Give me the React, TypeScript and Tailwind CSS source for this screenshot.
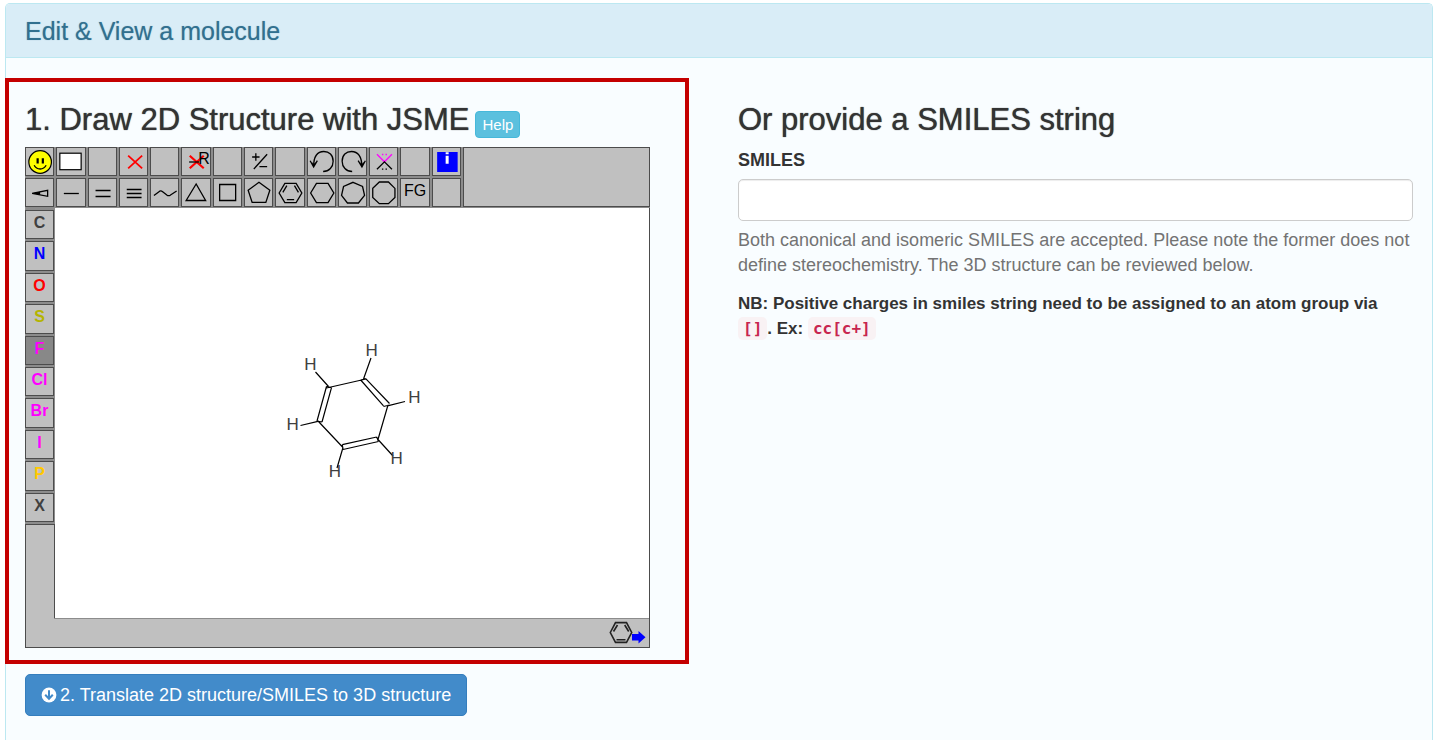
import React, { useState } from "react";

type Tool = { label: string; icon?: React.ReactNode; text?: string };

const stroke = { fill: "none", stroke: "#000", strokeWidth: 1.3 };

const topTools: Tool[] = [
  {
    label: "Smiles",
    icon: (
      <>
        <circle cx="15" cy="15" r="11.3" fill="#ff0" stroke="#000" strokeWidth="1.2" />
        <path d="M12.5 11.3v5.2M17.7 11.3v5.2" stroke="#000" strokeWidth="2.2" />
        <path d="M9 18.3Q11 22 15 22T21 18.3" {...stroke} />
      </>
    ),
  },
  { label: "New", icon: <rect x="3.7" y="6.2" width="21.3" height="16.5" fill="#fff" stroke="#000" strokeWidth="1.2" /> },
  { label: "Unused tool 1" },
  { label: "Delete atom", icon: <path d="M9 8.7L23 21.3M23 8.7L9 21.3" stroke="#f00" strokeWidth="1.8" /> },
  { label: "Unused tool 2" },
  {
    label: "Delete group",
    icon: (
      <>
        <path d="M8.6 8.7L22.6 21.3M22.6 8.7L8.6 21.3" stroke="#f00" strokeWidth="2.2" />
        <path d="M8 15H18" {...stroke} />
        <text x="17" y="17" fontSize="16" fill="#000">R</text>
      </>
    ),
  },
  { label: "Unused tool 3" },
  { label: "Charge", icon: <path d="M8 10h7.4M11.7 6.3v7.4M9.7 22L23 7.3M15.3 19.7H23" {...stroke} /> },
  { label: "Unused tool 4" },
  { label: "Undo", icon: <path d="M16 24.5C22 24.5 26 20 26 14.2C26 8 22 4.5 16.7 4.5C10.5 4.5 6.5 9 6.5 19.5M3 13.7L6.5 20L10.2 13.7M4.5 15.5L6.5 19L8.7 15.5" {...stroke} /> },
  { label: "Redo", icon: <path d="M14 24.5C8 24.5 4 20 4 14.2C4 8 8 4.5 13.3 4.5C19.5 4.5 23.5 9 23.8 19.5M20 13.7L23.8 20L27.2 13.7M21.5 15.5L23.8 19L25.7 15.5" {...stroke} /> },
  {
    label: "Spiro ring",
    icon: (
      <>
        <path d="M7.8 7.3L15.3 14.8L22.8 7.3" fill="none" stroke="#f0f" strokeWidth="1.3" />
        <path d="M7.8 22.3L15.3 14.8L22.8 22.3" {...stroke} />
        <path d="M12.8 7.5h1.4M16.4 7.5h1.4" stroke="#f0f" strokeWidth="1.3" />
        <path d="M12.8 22.2h1.4M16.4 22.2h1.4" {...stroke} />
      </>
    ),
  },
  { label: "Unused tool 5" },
  {
    label: "Information",
    icon: (
      <>
        <rect x="5" y="5" width="20.5" height="20" fill="#00f" />
        <path d="M15 5.3v2M15 8.7v8" stroke="#fff" strokeWidth="3" />
      </>
    ),
  },
];

const bondTools: Tool[] = [
  {
    label: "Stereo bond",
    icon: (
      <>
        <path d="M7 15.3L22.5 12.3V18.3Z" {...stroke} />
        <path d="M7 15.3L15 13.8V16.8Z" fill="#000" />
      </>
    ),
  },
  { label: "Single bond", icon: <path d="M7.7 15.5H22.7" {...stroke} /> },
  { label: "Double bond", icon: <path d="M7.4 12.5H22.4M7.4 18.5H22.4" {...stroke} /> },
  { label: "Triple bond", icon: <path d="M7.6 11.5H22.4M7.6 15.5H22.4M7.6 19.5H22.4" {...stroke} /> },
  { label: "Chain", icon: <path d="M3.8 17.5L9.5 13.2Q11 12.5 12.5 13.7L17 17.3Q18.5 18 20 17.3L26.5 13" {...stroke} /> },
  { label: "Three-membered ring", icon: <path d="M15 6L5 22.5H24.5Z" {...stroke} /> },
  { label: "Four-membered ring", icon: <path d="M6.5 6.5H22.5V22.5H6.5Z" {...stroke} /> },
  { label: "Five-membered ring", icon: <path d="M14.8 4.3L25.7 12.3L21.7 24.4H8L4 12.3Z" {...stroke} /> },
  {
    label: "Benzene ring",
    icon: <path d="M4 15L9.7 5.4H21L26.7 15L21 24.6H9.7ZM7.7 14.3L11.7 7.7M19.3 7.7L23.3 14.3M11.7 21.7H19" {...stroke} />,
  },
  { label: "Six-membered ring", icon: <path d="M3.5 15L9.3 5.4H20.9L26.7 15L20.9 24.6H9.3Z" {...stroke} /> },
  { label: "Seven-membered ring", icon: <path d="M14.9 4.3L24.4 8.5L26.4 17.3L20.3 25H9.3L3.4 17.3L5.4 8.5Z" {...stroke} /> },
  { label: "Eight-membered ring", icon: <path d="M10.2 4H19.3L25.8 10.4V19.4L19.3 25.7H10.2L3.6 19.4V10.4Z" {...stroke} /> },
  { label: "Functional groups", text: "FG" },
  { label: "Unused tool 6" },
];

const elements = [
  { symbol: "C", color: "text-[#404040]" },
  { symbol: "N", color: "text-[#0000ff]" },
  { symbol: "O", color: "text-[#ff0000]" },
  { symbol: "S", color: "text-[#b4b400]" },
  { symbol: "F", color: "text-[#ff00ff]" },
  { symbol: "Cl", color: "text-[#ff00ff]" },
  { symbol: "Br", color: "text-[#ff00ff]" },
  { symbol: "I", color: "text-[#ff00ff]" },
  { symbol: "P", color: "text-[#ffc800]" },
  { symbol: "X", color: "text-[#404040]" },
];

const cell = "ring-1 ring-inset ring-[#4c4c4c]";

function ToolButton({ tool }: { tool: Tool }) {
  return (
    <button type="button" aria-label={tool.label} className={`${cell} flex justify-center bg-[#c0c0c0] text-base leading-[25px] text-black`}>
      {tool.icon && (
        <svg viewBox="0 0 29 29" className="h-full w-full overflow-visible" aria-hidden="true">
          {tool.icon}
        </svg>
      )}
      {tool.text}
    </button>
  );
}

function Molecule() {
  return (
    <svg width="151" height="150" viewBox="-3 4 151 150" role="img" aria-label="Benzene">
      <path
        d="M46.5 54L86 45M108 71L97.7 106.5M63 113.5L38.5 87.5M46.5 52.5L37 87M51.5 53.7L42 88M80.7 46L103.5 71.8M85.7 44.7L109.5 69.5M62.3 110.7L96.7 103M63 115.5L98.5 107.5M62.3 110.7L63 115.5M96.7 103L98.5 107.5M46.5 52.5L51.5 53.7M37 87L42 88M80.7 46L85.7 44.7M103.5 72.5L109.5 71M48.5 52.5L35.5 38M83.5 45L91 24M107.5 71.8L125 67.5M98 105.5L113 122M63 113.5L57 134M39 87.2L20.5 91.5"
        fill="none"
        stroke="#000"
        strokeWidth="1.2"
      />
      <g fontSize="17" fill="#404040" textAnchor="middle">
        <text x="30.3" y="36">H</text>
        <text x="91.7" y="22">H</text>
        <text x="134.3" y="69">H</text>
        <text x="12.7" y="96">H</text>
        <text x="116.7" y="129.5">H</text>
        <text x="55" y="142.5">H</text>
      </g>
    </svg>
  );
}

function Editor() {
  const [element, setElement] = useState("F");
  return (
    <div>
      <div className="flex gap-[2px] bg-[#8c8c8c] pb-px">
        <div className="grid w-[436px] shrink-0 grid-cols-14 grid-rows-[29px_29px] gap-[2px]">
          {[...topTools, ...bondTools].map((tool) => (
            <ToolButton key={tool.label} tool={tool} />
          ))}
        </div>
        <div className={`${cell} flex-1 bg-[#c0c0c0]`} />
      </div>
      <div className="flex h-[410px]">
        <div className="flex w-[30px] flex-col gap-[2px] bg-[#8c8c8c] pt-[2px]">
          <div className="grid h-[312px] grid-rows-10 gap-[2px] pr-px">
            {elements.map(({ symbol, color }) => (
              <button
                key={symbol}
                type="button"
                aria-pressed={element === symbol}
                onClick={() => setElement(symbol)}
                className={`${cell} ${color} ${element === symbol ? "bg-[#888888]" : "bg-[#c0c0c0]"} flex justify-center text-base leading-[26px] font-bold`}
              >
                {symbol}
              </button>
            ))}
          </div>
          <div className="flex-1 border-x border-t border-[#4c4c4c] bg-[#c0c0c0]" />
        </div>
        <div className="flex flex-1 items-center justify-center border-r border-[#4c4c4c] bg-white">
          <Molecule />
        </div>
      </div>
      <div className="flex h-[30px] border-x border-b border-[#4c4c4c] bg-[#c0c0c0] pl-7">
        <div className="flex flex-1 items-center justify-end border-t border-[#8c8c8c] pr-[3px]">
          <svg width="37" height="24" viewBox="0 0 37 24" role="img" aria-label="Export molecule">
            <path d="M1.3 11.5L6.5 1.6H17.5L22.7 11.5L17.5 21.4H6.5Z" fill="none" stroke="#222" strokeWidth="1.6" />
            <path d="M4.5 10.5L8.5 4M15.7 4L19.7 10.5M7.5 18.7H16.5" stroke="#222" strokeWidth="1.6" />
            <path d="M23 13H29.5V10L36.5 16.3L29.5 22.5V19.5H23Z" fill="#00f" />
          </svg>
        </div>
      </div>
    </div>
  );
}

export default function App() {
  const [smiles, setSmiles] = useState("");
  return (
    <main className="flex min-h-screen flex-col bg-white pt-[3px] pr-[7px] pl-[5px] font-['Liberation_Sans',Arial,sans-serif] text-[18px] leading-[25px] text-[#333333]">
      <section className="flex flex-1 flex-col rounded-t-[5px] border border-b-0 border-[#bce8f1] bg-[#f9fdff]">
        <header className="rounded-t-[4px] border-b border-[#bce8f1] bg-[#d9edf7] px-[19px] pt-[13px] pb-[11px]">
          <h1 className="text-[25px] leading-[29px] text-[#31708f] [text-shadow:0_0_1px_#31708f80]">Edit &amp; View a molecule</h1>
        </header>
        <div className="grid grid-cols-2">
          <div className="pb-6">
            <div className="mt-5 mr-[30px] -ml-px border-4 border-[#c40000] pt-[21px] pr-[35px] pb-3 pl-4">
              <div className="mb-[10px] flex items-start gap-[6px]">
                <h2 className="text-[31px] leading-[34px] [text-shadow:0_0_1px_#333333]">1. Draw 2D Structure with JSME</h2>
                <button type="button" className="mt-2 -mb-px h-[27px] rounded-[4px] border border-[#46b8da] bg-[#5bc0de] px-[6px] text-[15px] leading-[25px] text-white">
                  Help
                </button>
              </div>
              <Editor />
            </div>
            <button type="button" className="mt-[10px] ml-[19px] flex h-[42px] items-center gap-[3px] rounded-[5px] border border-[#357ebd] bg-[#428bca] px-[15px] text-white">
              <svg width="16" height="16" viewBox="0 0 16 16" aria-hidden="true">
                <circle cx="8" cy="8" r="7.4" fill="#fff" />
                <path d="M8 3.2V11.6M4.2 7.8L8 11.8L11.8 7.8" fill="none" stroke="#428bca" strokeWidth="2" />
              </svg>
              2. Translate 2D structure/SMILES to 3D structure
            </button>
          </div>
          <form className="px-[19px] pt-[45px]" onSubmit={(e) => e.preventDefault()}>
            <h2 className="mb-[11px] text-[31px] leading-[34px] [text-shadow:0_0_1px_#333333]">Or provide a SMILES string</h2>
            <label htmlFor="smiles" className="mb-[6px] block font-bold">
              SMILES
            </label>
            <input
              id="smiles"
              type="text"
              value={smiles}
              onChange={(e) => setSmiles(e.target.value)}
              className="block h-[42px] w-full rounded-[5px] border border-[#cccccc] bg-white px-4 shadow-[inset_0_1px_1px_rgba(0,0,0,0.075)]"
            />
            <p className="mt-[7px] text-[#737373]">
              Both canonical and isomeric SMILES are accepted. Please note the former does not define stereochemistry. The 3D structure can be reviewed below.
            </p>
            <p className="mt-[13px] text-[17px] font-bold">
              NB: Positive charges in smiles string need to be assigned to an atom group via{" "}
              <code className="rounded-[5px] bg-[#f9f2f4] px-[5px] py-[2px] font-['DejaVu_Sans_Mono',monospace] text-base text-[#c7254e]">[]</code>. Ex:{" "}
              <code className="rounded-[5px] bg-[#f9f2f4] px-[5px] py-[2px] font-['DejaVu_Sans_Mono',monospace] text-base text-[#c7254e]">cc[c+]</code>
            </p>
          </form>
        </div>
      </section>
    </main>
  );
}
